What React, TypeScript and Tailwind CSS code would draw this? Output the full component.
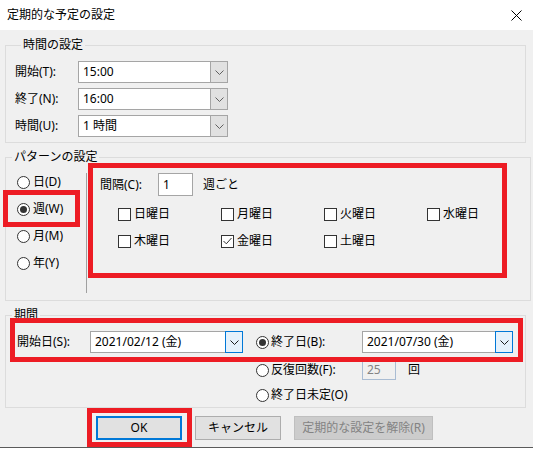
import React from "react";

function Chevron({ dark }: { dark?: boolean }) {
  return (
    <svg width="9" height="5" viewBox="0 0 9 5">
      <path d="M0.5 0.5 L4.5 4.5 L8.5 0.5" fill="none" stroke={dark ? "#1a1a1a" : "#606060"} strokeWidth="1" />
    </svg>
  );
}

function Combo({ value, className, focus }: { value: string; className: string; focus?: boolean }) {
  return (
    <div className={`flex h-[22px] border border-[#a5a5a5] bg-white ${className}`}>
      <div className="flex flex-1 items-center px-[4px]">{value}</div>
      <div
        className={`-my-px -mr-px flex h-[22px] w-[18px] items-center justify-center border ${
          focus ? "border-[#0078d7] bg-[#e5f1fb]" : "border-[#a5a5a5] bg-[#e1e1e1]"
        }`}
      >
        <Chevron dark={focus} />
      </div>
    </div>
  );
}

function Radio({ checked }: { checked?: boolean }) {
  return (
    <span className="flex h-[13px] w-[13px] shrink-0 items-center justify-center rounded-full border border-[#333333] bg-white">
      {checked && <span className="h-[7px] w-[7px] rounded-full bg-[#333333]" />}
    </span>
  );
}

function Check({ checked }: { checked?: boolean }) {
  return (
    <span className="flex h-[13px] w-[13px] shrink-0 items-center justify-center border border-[#333333] bg-white">
      {checked && (
        <svg width="9" height="8" viewBox="0 0 9 8">
          <path d="M0.5 4 L3.3 6.8 L8.5 1" fill="none" stroke="#333" strokeWidth="1" />
        </svg>
      )}
    </span>
  );
}

export default function App() {
  const days = [
    { label: "日曜日" },
    { label: "月曜日" },
    { label: "火曜日" },
    { label: "水曜日" },
    { label: "木曜日" },
    { label: "金曜日", checked: true },
    { label: "土曜日" },
  ];

  return (
    <div className="relative h-[451px] w-[533px] overflow-hidden bg-white font-['Noto_Sans','Noto_Sans_CJK_JP',sans-serif] text-[12px] leading-[16px] text-black">
      {/* title bar */}
      <div className="flex h-[30px] items-center justify-between bg-white pl-[7px] pr-[11px]">
        <span>定期的な予定の設定</span>
        <svg width="11" height="11" viewBox="0 0 11 11">
          <path d="M0.5 0.5 L10.5 10.5 M10.5 0.5 L0.5 10.5" stroke="#000" strokeWidth="1" />
        </svg>
      </div>

      {/* dialog body */}
      <div className="flex h-[417px] flex-col bg-[#f0f0f0]">
        {/* 時間の設定 */}
        <fieldset className="mx-[5px] mt-[7px] w-[521px] border border-[#dcdcdc] pb-[5px] pl-[9px] pt-[8px]">
          <legend className="ml-[6px] px-[2px]">時間の設定</legend>
          <div className="flex flex-col gap-[5px]">
            <div className="flex h-[22px] items-center">
              <span className="w-[63px]">開始(T):</span>
              <Combo value="15:00" className="w-[150px]" />
            </div>
            <div className="flex h-[22px] items-center">
              <span className="w-[63px]">終了(N):</span>
              <Combo value="16:00" className="w-[150px]" />
            </div>
            <div className="flex h-[22px] items-center">
              <span className="w-[63px]">時間(U):</span>
              <Combo value="1 時間" className="w-[150px]" />
            </div>
          </div>
        </fieldset>

        {/* パターンの設定 */}
        <fieldset className="mx-[5px] mt-[6px] w-[521px] border border-[#dcdcdc] pb-[7px]">
          <legend className="ml-[6px] px-[2px]">パターンの設定</legend>
          <div className="flex">
            <div className="flex w-[80px] flex-col gap-[11px] pl-[11px] pt-[9px]">
              {[
                { label: "日(D)" },
                { label: "週(W)", checked: true },
                { label: "月(M)" },
                { label: "年(Y)" },
              ].map((r) => (
                <div key={r.label} className="flex h-[16px] items-center gap-[3px]">
                  <Radio checked={r.checked} />
                  <span>{r.label}</span>
                </div>
              ))}
            </div>
            <div className="mt-[8px] h-[120px] w-px bg-[#a0a0a0]" />
            <div className="pl-[13px] pt-[8px]">
              <div className="flex h-[23px] items-center">
                <span className="w-[58px]">間隔(C):</span>
                <div className="flex h-[23px] w-[35px] items-center border border-[#a5a5a5] bg-white px-[4px]">1</div>
                <span className="ml-[10px]">週ごと</span>
              </div>
              <div className="ml-[18px] mt-[10px] grid grid-cols-[103px_103px_103px_103px] gap-y-[11px]">
                {days.map((d) => (
                  <div key={d.label} className="flex h-[16px] items-center gap-[3px]">
                    <Check checked={d.checked} />
                    <span>{d.label}</span>
                  </div>
                ))}
              </div>
            </div>
          </div>
        </fieldset>

        {/* 期間 */}
        <fieldset className="mx-[5px] mt-[6px] w-[521px] border border-[#dcdcdc] pb-[4px] pt-[8px]">
          <legend className="ml-[6px] px-[2px]">期間</legend>
          <div className="flex items-start">
            <div className="flex h-[22px] items-center pl-[11px]">
              <span className="w-[73px]">開始日(S):</span>
              <Combo value="2021/02/12 (金)" className="w-[153px]" focus />
            </div>
            <div className="ml-[13px] flex flex-col">
              <div className="flex h-[22px] items-center">
                <Radio checked />
                <span className="ml-[2px] w-[91px]">終了日(B):</span>
                <Combo value="2021/07/30 (金)" className="w-[151px]" focus />
              </div>
              <div className="mt-[7px] flex h-[20px] items-center">
                <Radio />
                <span className="ml-[2px] w-[91px]">反復回数(F):</span>
                <div className="flex h-[20px] w-[34px] items-center border border-[#a9bcd3] px-[4px] text-[#838383]">25</div>
                <span className="ml-[12px]">回</span>
              </div>
              <div className="mt-[7px] flex h-[16px] items-center">
                <Radio />
                <span className="ml-[2px]">終了日未定(O)</span>
              </div>
            </div>
          </div>
        </fieldset>

        {/* buttons */}
        <div className="mt-[8px] flex gap-[13px] pl-[96px]">
          <button className="flex h-[24px] w-[86px] items-center justify-center border-2 border-[#0078d7] bg-[#e1e1e1]">OK</button>
          <button className="flex h-[24px] w-[86px] items-center justify-center border border-[#adadad] bg-[#e1e1e1]">キャンセル</button>
          <button className="flex h-[24px] w-[139px] items-center justify-center border border-[#bfbfbf] bg-[#cccccc] text-[#838383]">
            定期的な設定を解除(R)
          </button>
        </div>
      </div>
      <div className="h-px bg-[#5a5a5a]" />

      {/* red annotation boxes */}
      <div className="absolute left-[3px] top-[190px] h-[37px] w-[77px] border-[5px] border-[#ed1c24]" />
      <div className="absolute left-[88px] top-[163px] h-[115px] w-[419px] border-[5px] border-[#ed1c24]" />
      <div className="absolute left-[10px] top-[318px] h-[44px] w-[513px] border-[5px] border-[#ed1c24]" />
      <div className="absolute left-[87px] top-[408px] h-[39px] w-[105px] border-[5px] border-[#ed1c24]" />
    </div>
  );
}
